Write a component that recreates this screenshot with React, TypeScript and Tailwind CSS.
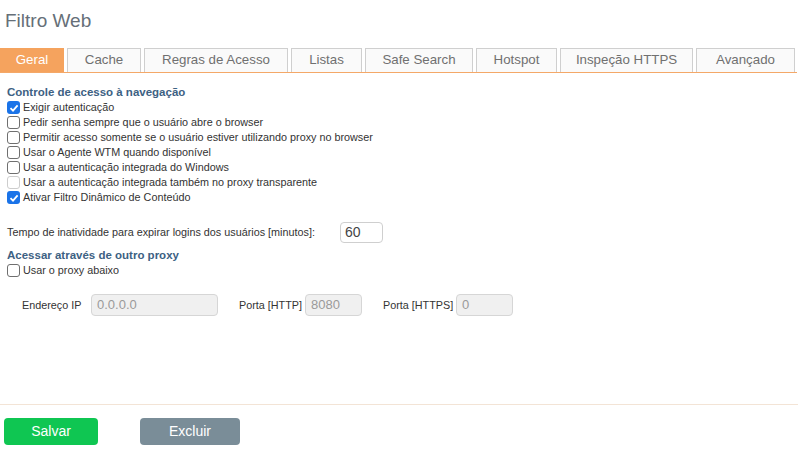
import React from "react";

const tabs = ["Geral", "Cache", "Regras de Acesso", "Listas", "Safe Search", "Hotspot", "Inspeção HTTPS", "Avançado"];
const tabW = [64, 74, 144, 71, 108, 81, 133, 99];

const checks: { label: string; checked?: boolean; disabled?: boolean }[] = [
  { label: "Exigir autenticação", checked: true },
  { label: "Pedir senha sempre que o usuário abre o browser" },
  { label: "Permitir acesso somente se o usuário estiver utilizando proxy no browser" },
  { label: "Usar o Agente WTM quando disponível" },
  { label: "Usar a autenticação integrada do Windows" },
  { label: "Usar a autenticação integrada também no proxy transparente", disabled: true },
  { label: "Ativar Filtro Dinâmico de Conteúdo", checked: true },
];

function Box({ checked, disabled }: { checked?: boolean; disabled?: boolean }) {
  if (checked) {
    return (
      <span className="w-[13px] h-[13px] rounded-[3px] bg-[#1a73e8] flex items-center justify-center shrink-0">
        <svg width="10" height="10" viewBox="0 0 10 10">
          <path d="M1.5 5.2 L4 7.6 L8.6 2.4" stroke="white" strokeWidth="1.8" fill="none" />
        </svg>
      </span>
    );
  }
  return (
    <span
      className={`w-[13px] h-[13px] rounded-[3px] border shrink-0 bg-white ${
        disabled ? "border-[#cdcdcd]" : "border-[#6f6f6f]"
      }`}
    />
  );
}

function Check({ label, checked, disabled }: { label: string; checked?: boolean; disabled?: boolean }) {
  return (
    <div className="flex items-center h-[15px] gap-[3px] text-[10.8px] text-[#333]">
      <Box checked={checked} disabled={disabled} />
      <span>{label}</span>
    </div>
  );
}

export default function App() {
  return (
    <div
      className="w-[798px] h-[456px] bg-white flex flex-col"
      style={{ fontFamily: "'Liberation Sans', Arial, sans-serif" }}
    >
      <div className="pl-[5px] pt-[7px] h-[48px] text-[19px] text-[#666f78]">Filtro Web</div>
      <div className="flex gap-[3px] border-b border-[#f4a868] h-[25px] w-[797px]">
        {tabs.map((t, i) => (
          <div
            key={t}
            style={{ width: tabW[i] }}
            className={`flex items-center justify-center pb-[1px] text-[13.3px] ${
              i === 0
                ? "bg-[#f5a35e] text-white"
                : "bg-[#fafafa] border border-b-0 border-[#cfcfcf] text-[#707070]"
            }`}
          >
            {t}
          </div>
        ))}
      </div>
      <div className="pl-[7px] pt-[12px] flex flex-col">
        <div className="text-[11.5px] font-bold text-[#3d6183] h-[15px] leading-[15px]">
          Controle de acesso à navegação
        </div>
        <div className="flex flex-col">
          {checks.map((c) => (
            <Check key={c.label} {...c} />
          ))}
        </div>
        <div className="flex items-center mt-[17px] h-[21px] text-[10.8px] text-[#333]">
          <span className="w-[333px]">Tempo de inatividade para expirar logins dos usuários [minutos]:</span>
          <div className="w-[43px] h-[21px] border border-[#cfcfcf] rounded-[4px] px-[4px] flex items-center text-[14px] text-[#444]">
            60
          </div>
        </div>
        <div className="text-[11.5px] font-bold text-[#3d6183] h-[15px] leading-[15px] mt-[5px]">
          Acessar através de outro proxy
        </div>
        <Check label="Usar o proxy abaixo" />
        <div className="flex items-center mt-[16px] h-[22px] text-[10.8px] text-[#333]">
          <span className="ml-[15px] w-[69px]">Endereço IP</span>
          <div className="w-[127px] h-[22px] bg-[#f0f0f0] border border-[#d6d6d6] rounded-[4px] px-[5px] flex items-center text-[13px] text-[#9a9a9a]">
            0.0.0.0
          </div>
          <span className="ml-[21px] w-[66px]">Porta [HTTP]</span>
          <div className="w-[57px] h-[22px] bg-[#f0f0f0] border border-[#d6d6d6] rounded-[4px] px-[5px] flex items-center text-[13px] text-[#9a9a9a]">
            8080
          </div>
          <span className="ml-[21px] w-[73px]">Porta [HTTPS]</span>
          <div className="w-[57px] h-[22px] bg-[#f0f0f0] border border-[#d6d6d6] rounded-[4px] px-[5px] flex items-center text-[13px] text-[#9a9a9a]">
            0
          </div>
        </div>
      </div>
      <div className="mt-auto mb-[11px]">
        <div className="border-t border-[#f3e4d6] w-[798px]" />
        <div className="flex items-center pt-[13px] pl-[4px] gap-[42px]">
          <button className="w-[94px] h-[27px] rounded-[4px] bg-[#0fc652] text-white text-[14px]">Salvar</button>
          <button className="w-[100px] h-[27px] rounded-[4px] bg-[#7a8d98] text-white text-[14px]">Excluir</button>
        </div>
      </div>
    </div>
  );
}
